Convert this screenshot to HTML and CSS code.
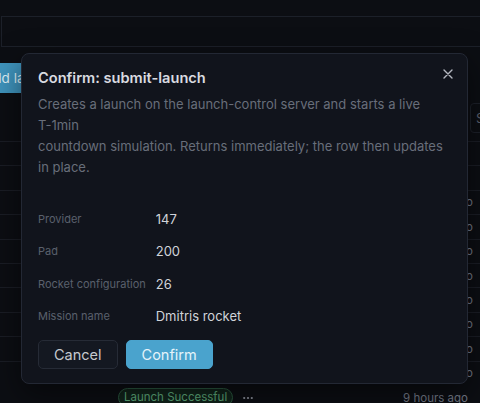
FILE: index.html
```html
<!DOCTYPE html>
<html lang="en">
<head>
    <meta charset="UTF-8">
    <meta name="viewport" content="width=device-width, initial-scale=1.0">
    <title>Launches</title>
    <link rel="stylesheet" href="styles.css">
</head>
<body>
    <div id="page">
        <div class="searchbar"></div>

        <div class="toolbar">
            <button class="btn-add">Add launch</button>
        </div>

        <div class="filters">
            <div class="filter-box">Status</div>
        </div>

        <!-- Launch list -->
        <div class="launch-table">
            <div class="row"></div>
            <div class="row"></div>
            <div class="row"><span class="when">9 hours ago</span></div>
            <div class="row"><span class="when">9 hours ago</span></div>
            <div class="row"><span class="when">9 hours ago</span></div>
            <div class="row"><span class="when">9 hours ago</span></div>
            <div class="row"><span class="when">9 hours ago</span></div>
            <div class="row"><span class="when">9 hours ago</span></div>
            <div class="row"><span class="when">9 hours ago</span></div>
            <div class="row"><span class="when">9 hours ago</span></div>
            <div class="row row-last">
                <span class="badge">Launch Successful</span>
                <span class="more">
                    <svg width="10" height="4" viewBox="0 0 10 4">
                        <circle cx="1.2" cy="2" r="1.1" fill="currentColor"/>
                        <circle cx="5" cy="2" r="1.1" fill="currentColor"/>
                        <circle cx="8.8" cy="2" r="1.1" fill="currentColor"/>
                    </svg>
                </span>
                <span class="when">9 hours ago</span>
            </div>
        </div>
    </div>

    <!-- Confirm dialog -->
    <div class="dialog">
        <button class="close" aria-label="Close">
            <svg width="10" height="10" viewBox="0 0 10 10">
                <path d="M1 1L9 9M9 1L1 9" stroke="currentColor" stroke-width="1.4" stroke-linecap="round"/>
            </svg>
        </button>
        <h2>Confirm: submit-launch</h2>
        <p class="desc">Creates a launch on the launch-control server and starts a live <span class="nowrap">T-1min</span>
countdown simulation. Returns immediately; the row then updates in place.</p>

        <div class="fields">
            <span class="label">Provider</span><span class="value">147</span>
            <span class="label">Pad</span><span class="value">200</span>
            <span class="label">Rocket configuration</span><span class="value">26</span>
            <span class="label">Mission name</span><span class="value">Dmitris rocket</span>
        </div>

        <div class="actions">
            <button class="btn btn-cancel">Cancel</button>
            <button class="btn btn-confirm">Confirm</button>
        </div>
    </div>
</body>
</html>
```

FILE: styles.css
```css
body {
    font-family: Inter, "Noto Sans", sans-serif;
    background: #0c0e13;
    margin: 0;
    padding: 0;
    overflow: hidden;
    height: 403px;
    position: relative;
}
#page {
    padding-top: 16px;
}
.searchbar {
    margin-left: 1px;
    height: 29px;
    border: 1px solid #1c2029;
    border-right: none;
}
.toolbar {
    margin-top: 16px;
    height: 30px;
    display: flex;
}
.btn-add {
    margin-left: -28px;
    height: 30px;
    padding: 0 12px;
    background: #3f94bd;
    color: #dcefF7;
    border: none;
    border-radius: 5px;
    font-family: inherit;
    font-size: 13.5px;
}
.filters {
    margin-top: 10px;
    height: 30px;
    display: flex;
    justify-content: flex-end;
}
.filter-box {
    width: 60px;
    margin-right: -50px;
    box-sizing: border-box;
    border: 1px solid #1c2029;
    border-radius: 4px;
    color: #5c6270;
    font-size: 13px;
    line-height: 28px;
    padding-left: 5px;
}
.launch-table {
    margin-top: 8px;
}
.row {
    height: 24.4px;
    box-sizing: border-box;
    border-top: 1px solid #1a1d25;
    display: flex;
    align-items: center;
    justify-content: flex-end;
    padding-right: 7px;
}
.when {
    color: #757b88;
    font-size: 11.5px;
}
.row-last {
    justify-content: flex-start;
    padding-left: 118px;
    padding-right: 12px;
    border-top-color: transparent;
}
.row-last .when {
    margin-left: auto;
}
.badge {
    height: 17px;
    line-height: 17px;
    padding: 0 5px;
    border: 1px solid #2b5840;
    border-radius: 10px;
    background: #11241b;
    color: #5fab7c;
    font-size: 11.5px;
}
.more {
    margin-left: 10px;
    color: #9095a0;
    display: flex;
}

/* dialog */
.dialog {
    position: absolute;
    left: 21px;
    top: 53px;
    width: 447px;
    box-sizing: border-box;
    padding: 14px 16px 14px;
    background: #11141c;
    border: 1px solid #232834;
    border-radius: 8px;
    box-shadow: 0 10px 30px rgba(0, 0, 0, 0.5);
}
.dialog h2 {
    margin: 0;
    font-size: 14.6px;
    line-height: 20px;
    font-weight: 600;
    color: #d9dbe0;
}
.close {
    position: absolute;
    right: 14px;
    top: 15px;
    padding: 0;
    background: none;
    border: none;
    color: #b4b8c0;
    cursor: pointer;
    line-height: 0;
}
.desc {
    margin: 6px 0 0;
    font-size: 13px;
    line-height: 21px;
    color: #686e7a;
    white-space: pre-line;
    padding-right: 2px;
}
.nowrap {
    white-space: nowrap;
}
.fields {
    margin-top: 31px;
    display: grid;
    grid-template-columns: max-content 1fr;
    column-gap: 10px;
    row-gap: 12.4px;
    align-items: center;
}
.label {
    font-size: 11px;
    line-height: 20px;
    color: #5a606c;
}
.value {
    font-size: 13px;
    line-height: 20px;
    color: #d0d3d9;
}
.actions {
    margin-top: 14px;
    display: flex;
    gap: 8px;
}
.btn {
    height: 29px;
    padding: 0 15px;
    border-radius: 5px;
    font-family: inherit;
    font-size: 14.5px;
    cursor: pointer;
}
.btn-cancel {
    background: #141821;
    border: 1px solid #262b36;
    color: #c6c9cf;
}
.btn-confirm {
    background: #4aa3cd;
    border: 1px solid #4aa3cd;
    color: #e4f3fa;
}
```
